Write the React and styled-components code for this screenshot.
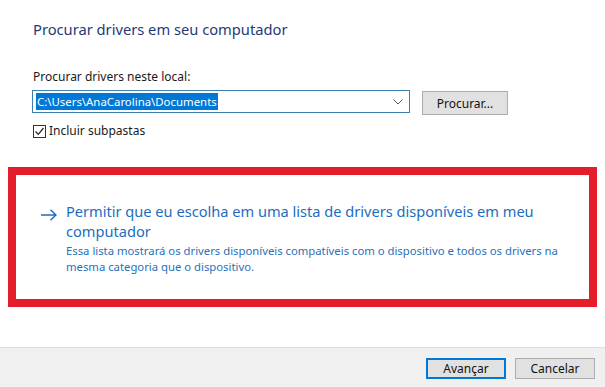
import React from 'react';
import styled, { createGlobalStyle } from 'styled-components';

const Global = createGlobalStyle`
  html, body {
    margin: 0;
    padding: 0;
    background: #ffffff;
  }
  body {
    font-family: "Noto Sans", "Open Sans", sans-serif;
  }
`;

const Page = styled.div`
  width: 605px;
  height: 387px;
  display: flex;
  flex-direction: column;
  background: #ffffff;
  overflow: hidden;
`;

const Content = styled.div`
  flex: 1;
  display: flex;
  flex-direction: column;
  padding: 19px 0 0 0;
`;

const Title = styled.h1`
  margin: 0 0 0 33px;
  font-size: 14.7px;
  font-weight: 400;
  line-height: 20px;
  color: #1f3a78;
`;

const Label = styled.div`
  margin: 30px 0 0 33px;
  font-size: 12px;
  line-height: 16px;
  color: #1a1a1a;
`;

const PathRow = styled.div`
  display: flex;
  align-items: flex-start;
  gap: 12px;
  margin: 5px 0 0 32px;
`;

const Combo = styled.div`
  width: 378px;
  height: 23px;
  border: 1px solid #3c7fb1;
  display: flex;
  align-items: center;
  justify-content: space-between;
  padding: 0 6px 0 3px;
  box-sizing: border-box;
`;

const Selected = styled.span`
  background: #0078d7;
  color: #ffffff;
  font-size: 11.4px;
  line-height: 17px;
  padding: 0 1px;
`;

const Chevron = () => (
  <svg width="10" height="6" viewBox="0 0 10 6">
    <path d="M0.5 0.5 L5 5 L9.5 0.5" fill="none" stroke="#555" strokeWidth="1" />
  </svg>
);

const Button = styled.button`
  width: ${(p) => p.w || 80}px;
  height: ${(p) => p.h || 21}px;
  margin-top: ${(p) => p.mt || 0}px;
  background: #e1e1e1;
  border: ${(p) => (p.primary ? '2px solid #0078d7' : '1px solid #adadad')};
  font-family: "Noto Sans", "Open Sans", sans-serif;
  font-size: 12px;
  color: #111;
  padding: 0;
  box-sizing: border-box;
`;

const CheckRow = styled.label`
  display: flex;
  align-items: center;
  gap: 3px;
  margin: 8px 0 0 33px;
  font-size: 12px;
  line-height: 16px;
  color: #1a1a1a;
`;

const Box = styled.span`
  width: 13px;
  height: 13px;
  box-sizing: border-box;
  border: 1px solid #333;
  display: inline-flex;
  align-items: center;
  justify-content: center;
  background: #fff;
`;

const Highlight = styled.div`
  margin: 28px 0 0 8px;
  width: 589px;
  height: 140px;
  box-sizing: border-box;
  border: 8px solid #e31e2a;
  padding: 26px 0 0 25px;
  display: flex;
  gap: 9px;
`;

const Arrow = () => (
  <svg width="16" height="12" viewBox="0 0 16 12" style={{ marginTop: 8, flexShrink: 0 }}>
    <path d="M0 6 H15 M9.5 0.8 L15 6 L9.5 11.2" fill="none" stroke="#1c6dc1" strokeWidth="1.4" />
  </svg>
);

const LinkText = styled.div`
  display: flex;
  flex-direction: column;
`;

const LinkTitle = styled.div`
  font-size: 14.6px;
  line-height: 20px;
  color: #1c6dc1;
  width: 500px;
`;

const LinkDesc = styled.div`
  margin-top: 2px;
  font-size: 11.3px;
  line-height: 16px;
  color: #2a70ba;
  width: 500px;
`;

const Footer = styled.div`
  height: 40px;
  border-top: 1px solid #dfdfdf;
  background: #f0f0f0;
  display: flex;
  justify-content: flex-end;
  align-items: flex-start;
  gap: 9px;
  padding: 10px 10px 0 0;
  box-sizing: border-box;
`;

export default function App() {
  return (
    <Page>
      <Global />
      <Content>
        <Title>Procurar drivers em seu computador</Title>
        <Label>Procurar drivers neste local:</Label>
        <PathRow>
          <Combo>
            <Selected>C:\Users\AnaCarolina\Documents</Selected>
            <Chevron />
          </Combo>
          <Button w={86} h={24} mt={1}>Procurar...</Button>
        </PathRow>
        <CheckRow>
          <Box>
            <svg width="11" height="11" viewBox="0 0 11 11">
              <path d="M1.5 5.5 L4.3 8.4 L9.5 2" fill="none" stroke="#222" strokeWidth="1.2" />
            </svg>
          </Box>
          Incluir subpastas
        </CheckRow>
        <Highlight>
          <Arrow />
          <LinkText>
            <LinkTitle>Permitir que eu escolha em uma lista de drivers disponíveis em meu computador</LinkTitle>
            <LinkDesc>
              Essa lista mostrará os drivers disponíveis compatíveis com o dispositivo e todos os drivers na mesma categoria que o dispositivo.
            </LinkDesc>
          </LinkText>
        </Highlight>
      </Content>
      <Footer>
        <Button primary>Avançar</Button>
        <Button>Cancelar</Button>
      </Footer>
    </Page>
  );
}
